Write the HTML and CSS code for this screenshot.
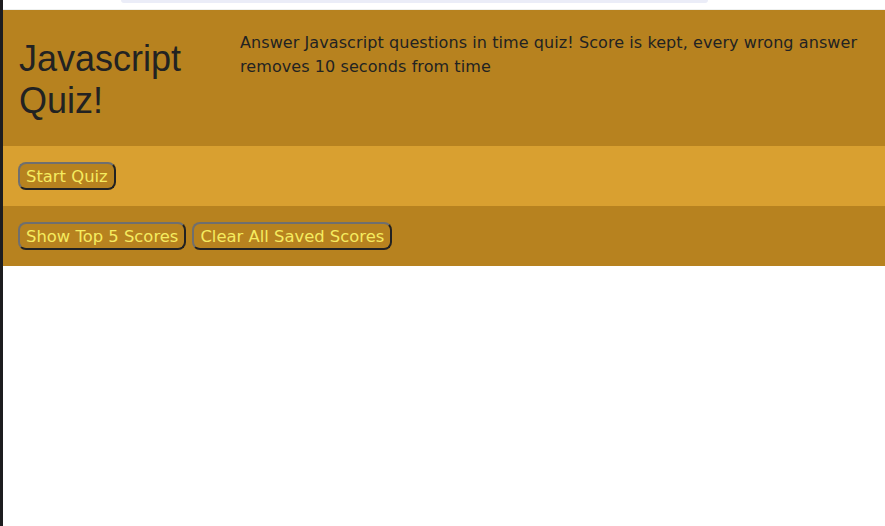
FILE: index.html
```html
<!DOCTYPE html>
<html lang="en">
<head>
<meta charset="utf-8">
<title>Javascript Quiz!</title>
<link rel="stylesheet" href="styles.css">
</head>
<body>
<div class="frame">
  <div class="edge"></div>
  <div class="page">
    <div class="topstrip"><div class="pill"></div></div>
    <header class="header">
      <h1 class="title">Javascript Quiz!</h1>
      <p class="intro">Answer Javascript questions in time quiz! Score is kept, every wrong answer removes 10 seconds from time</p>
    </header>
    <section class="band band-light">
      <button class="btn">Start Quiz</button>
    </section>
    <section class="band band-dark">
      <button class="btn">Show Top 5 Scores</button>
      <button class="btn">Clear All Saved Scores</button>
    </section>
  </div>
</div>
</body>
</html>
```
FILE: styles.css
```css
html, body {
  margin: 0;
  padding: 0;
  height: 100%;
  background: #ffffff;
}
.frame {
  display: flex;
  height: 100%;
}
.edge {
  width: 3px;
  flex: 0 0 3px;
  background: #1d1d1f;
}
.page {
  flex: 1;
  display: flex;
  flex-direction: column;
}
.topstrip {
  height: 10px;
  background: #ffffff;
  border-bottom: 1px solid #eef0ee;
  box-sizing: border-box;
}
.pill {
  margin-left: 118px;
  width: 587px;
  height: 3px;
  background: #ebedf8;
  border-radius: 0 0 10px 10px;
}
.header {
  display: grid;
  grid-template-columns: 237px 1fr;
  background: #b7821f;
  height: 136px;
  box-sizing: border-box;
}
.title {
  margin: 0;
  padding: 28px 0 0 16px;
  font-family: "Liberation Sans", Arial, sans-serif;
  font-weight: normal;
  font-size: 36px;
  line-height: 42px;
  color: #222222;
  width: 200px;
}
.intro {
  margin: 0;
  padding: 21px 20px 0 0;
  font-family: "DejaVu Sans", Verdana, sans-serif;
  font-size: 16px;
  letter-spacing: 0.08px;
  line-height: 24px;
  color: #222222;
}
.band {
  height: 60px;
  display: flex;
  align-items: center;
  gap: 6px;
  padding-left: 15px;
  box-sizing: border-box;
}
.band-light { background: #d9a030; }
.band-dark { background: #b7821f; }
.btn {
  font-family: "DejaVu Sans", Verdana, sans-serif;
  font-size: 16.4px;
  line-height: 20px;
  height: 28px;
  padding: 3px 6px 1px;
  background: #b7821f;
  color: #f5eb5f;
  border: 2px solid;
  border-color: #6f6f6f #222222 #222222 #6f6f6f;
  border-radius: 8px;
  box-sizing: border-box;
}
```
